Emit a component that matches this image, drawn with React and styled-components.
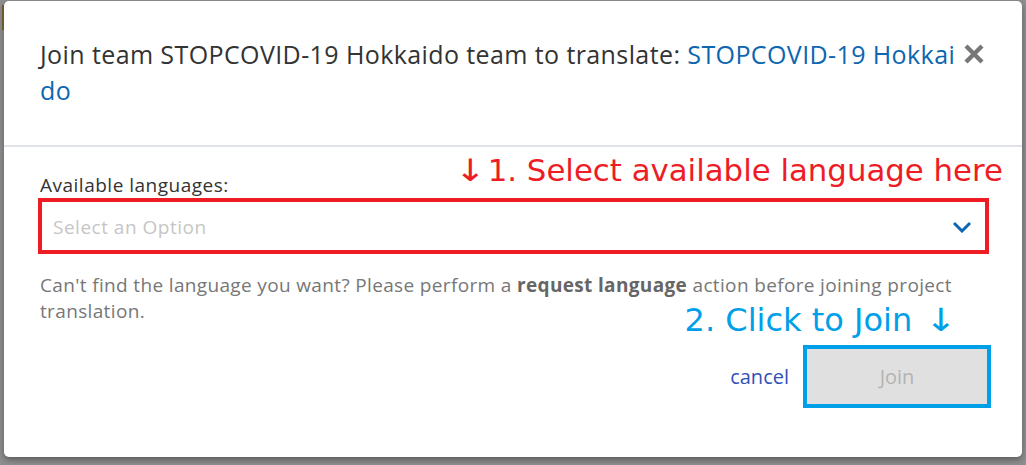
import React from "react";
import styled, { createGlobalStyle } from "styled-components";

const Global = createGlobalStyle`
  html, body { margin: 0; padding: 0; }
  body {
    background: #8e8e8e;
    font-family: "Open Sans", Lato, sans-serif;
    width: 1026px;
    height: 465px;
    overflow: hidden;
  }
`;

const Backdrop = styled.div`
  padding: 1px 4px 0 4px;
  height: 465px;
  box-sizing: border-box;
  position: relative;
`;

const Edge = styled.div`
  position: absolute;
  left: 2px;
  top: 5px;
  width: 2px;
  height: 25px;
  background: #6b5a2c;
`;

const Modal = styled.div`
  width: 1018px;
  height: 456px;
  background: #fff;
  border-radius: 5px;
  box-shadow: 0 3px 6px rgba(0, 0, 0, 0.35);
  display: flex;
  flex-direction: column;
`;

const Header = styled.div`
  display: flex;
  align-items: flex-start;
  padding: 35px 37px 37px 36px;
  border-bottom: 2px solid #dfe3e7;
`;

const Title = styled.h2`
  margin: 0;
  flex: 1;
  font-weight: 400;
  font-size: 25px;
  letter-spacing: 0.4px;
  line-height: 36px;
  color: #333;
  word-break: break-all;
`;

const ProjectLink = styled.a`
  color: #0d66b0;
  text-decoration: none;
`;

const Close = styled.button`
  border: 0;
  background: none;
  padding: 0;
  margin: 7px 0 0 4px;
  width: 22px;
  height: 22px;
  cursor: pointer;
  display: flex;
  align-items: center;
  justify-content: center;
`;

const Body = styled.div`
  padding: 3px 33px 0 34px;
  display: flex;
  flex-direction: column;
`;

const LabelRow = styled.div`
  display: flex;
  justify-content: space-between;
  align-items: flex-end;
  margin-right: -14px;
  padding-left: 2px;
`;

const Label = styled.label`
  font-size: 19px;
  letter-spacing: 0.5px;
  color: #333;
  line-height: 24px;
  margin-bottom: 1px;
`;

const Note = styled.div`
  font-family: "DejaVu Sans", "Noto Sans CJK JP", sans-serif;
  font-size: ${(p) => p.$size}px;
  line-height: 40px;
  color: ${(p) => p.$color};
  white-space: nowrap;
  margin-bottom: ${(p) => p.$below || 0}px;
`;

const Arrow = styled.span`
  display: inline-block;
  padding: ${(p) => (p.$before ? "0 4px 0 0" : "0 0 0 14px")};
  transform: scaleX(1.2);
`;

const SelectBox = styled.div`
  height: 56px;
  box-sizing: border-box;
  border: 4px solid #ee1c25;
  display: flex;
  align-items: center;
  justify-content: space-between;
  padding: 2px 13px 0 11px;
`;

const Placeholder = styled.span`
  font-size: 19px;
  letter-spacing: 0.5px;
  color: #c6c6c6;
`;

const Help = styled.p`
  margin: 18px 0 0 2px;
  font-size: 19px;
  letter-spacing: 0.35px;
  line-height: 26px;
  color: #777;
  b { color: #666; font-weight: 700; }
`;

const JoinNoteRow = styled.div`
  display: flex;
  justify-content: flex-end;
  margin-top: -24px;
  padding-right: 36px;
`;

const Actions = styled.div`
  display: flex;
  justify-content: flex-end;
  align-items: center;
  gap: 14px;
  margin-top: 5px;
`;

const Cancel = styled.a`
  font-size: 20px;
  color: #3250b8;
  text-decoration: none;
  cursor: pointer;
`;

const JoinButton = styled.button`
  width: 188px;
  height: 63px;
  box-sizing: border-box;
  border: 4px solid #00a0e9;
  background: #e0e0e0;
  color: #b3b3b3;
  font-family: "Open Sans", sans-serif;
  font-size: 20px;
  cursor: not-allowed;
  margin-right: -2px;
`;

export default function App() {
  return (
    <>
      <Global />
      <Backdrop>
        <Edge />
        <Modal>
          <Header>
            <Title>
              Join team STOPCOVID-19 Hokkaido team to translate:{" "}
              <ProjectLink>STOPCOVID-19 Hokkaido</ProjectLink>
            </Title>
            <Close aria-label="close">
              <svg width="22" height="22" viewBox="0 0 22 22">
                <path d="M3 3 L19 19 M19 3 L3 19" stroke="#777" strokeWidth="4.4" />
              </svg>
            </Close>
          </Header>
          <Body>
            <LabelRow>
              <Label>Available languages:</Label>
              <Note $color="#ee1c25" $size={30.8} $below={8}>
                <Arrow $before>↓</Arrow>1. Select available language here
              </Note>
            </LabelRow>
            <SelectBox>
              <Placeholder>Select an Option</Placeholder>
              <svg width="20" height="12" viewBox="0 0 20 12">
                <path d="M2 2 L10 10 L18 2" fill="none" stroke="#0d66b0" strokeWidth="3" />
              </svg>
            </SelectBox>
            <Help>
              Can't find the language you want? Please perform a <b>request language</b> action before joining project translation.
            </Help>
            <JoinNoteRow>
              <Note $color="#00a0e9" $size={32}>
                2. Click to Join<Arrow>↓</Arrow>
              </Note>
            </JoinNoteRow>
            <Actions>
              <Cancel>cancel</Cancel>
              <JoinButton disabled>Join</JoinButton>
            </Actions>
          </Body>
        </Modal>
      </Backdrop>
    </>
  );
}
